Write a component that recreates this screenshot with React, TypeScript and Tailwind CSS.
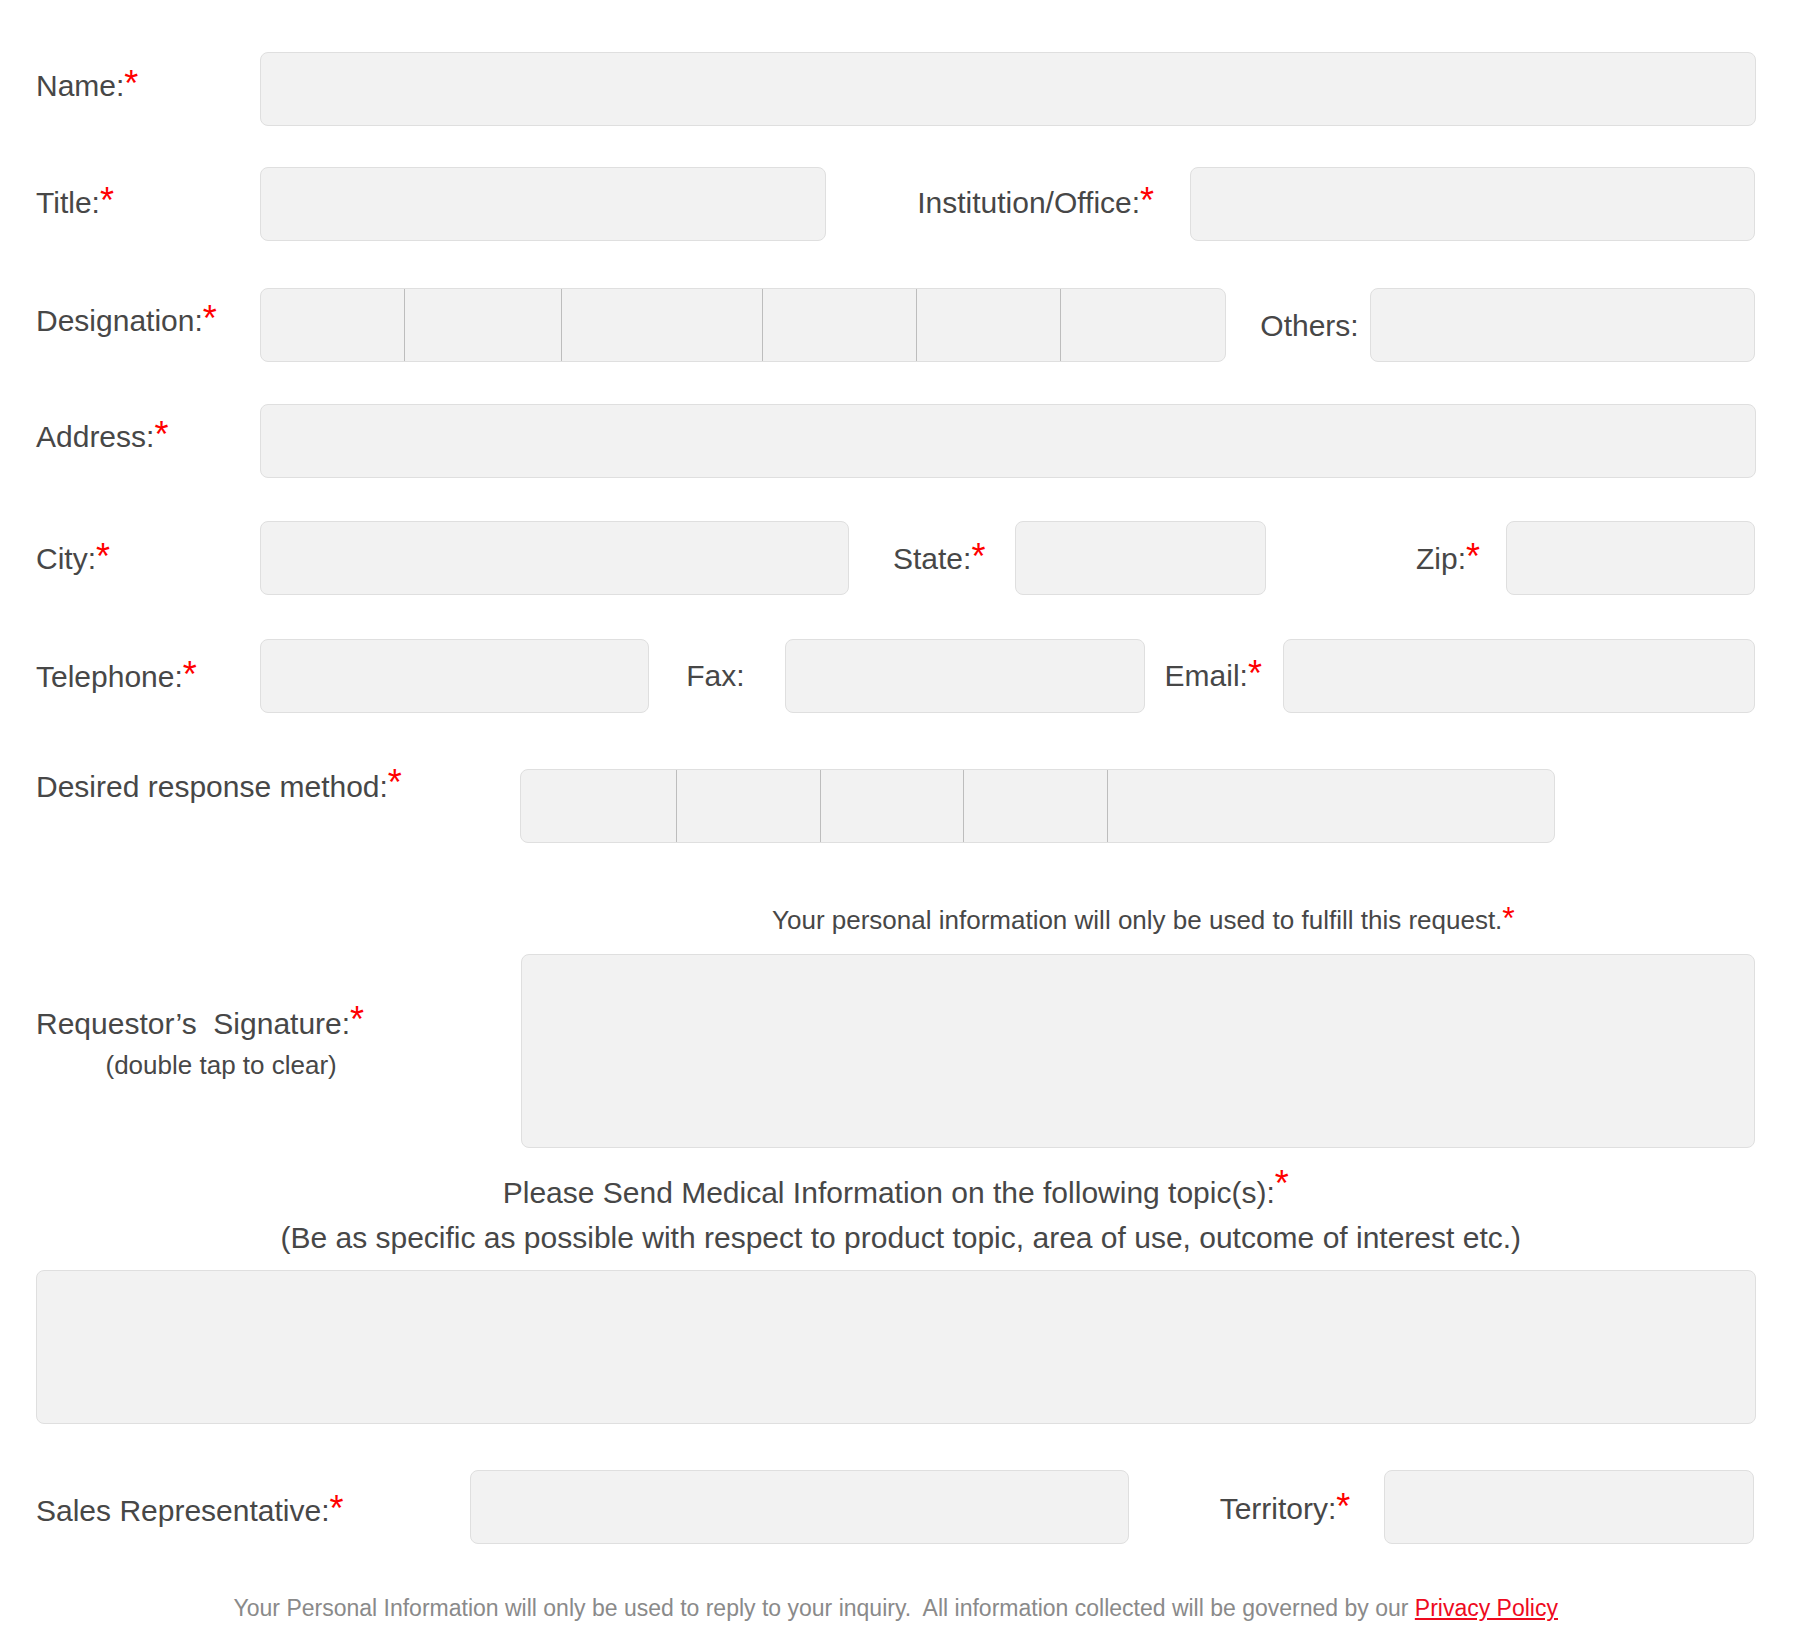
import React from "react";

const Star = ({ cls = "" }: { cls?: string }) => (
  <span className={`text-[36px] leading-[0px] text-[#ff0000] ${cls}`}>*</span>
);

const Label = ({ cls, children }: { cls: string; children: React.ReactNode }) => (
  <div className={`shrink-0 whitespace-nowrap text-[30px] leading-[36px] text-[#474747] ${cls}`}>{children}</div>
);

const Box = ({ cls }: { cls: string }) => (
  <div className={`shrink-0 h-[74px] rounded-[8px] border border-[#dfdfdf] bg-[#f2f2f2] ${cls}`} />
);

const Gap = ({ cls }: { cls: string }) => <div className={`shrink-0 ${cls}`} />;

const Seg = ({ cls }: { cls: string }) => <div className={`h-full ${cls}`} />;

export default function App() {
  return (
    <div className="min-h-[1650px] w-[1800px] bg-white font-['Liberation_Sans',Arial,sans-serif]">
      <div className="ml-[36px] w-[1719.5px] pt-[52px]">
        {/* Name */}
        <div className="flex items-start">
          <Label cls="w-[223.5px] mt-[16px]">Name:<Star /></Label>
          <Box cls="w-[1496px]" />
        </div>

        {/* Title / Institution */}
        <div className="mt-[41px] flex items-start">
          <Label cls="w-[223.5px] mt-[18px]">Title:<Star /></Label>
          <Box cls="w-[566px]" />
          <Gap cls="w-[91.7px]" />
          <Label cls="w-[272.8px] mt-[18px]">Institution/Office:<Star /></Label>
          <Box cls="w-[565.5px]" />
        </div>

        {/* Designation / Others */}
        <div className="mt-[47px] flex items-start">
          <Label cls="w-[223.5px] mt-[15px]">Designation:<Star /></Label>
          <div className="flex h-[74px] w-[966px] shrink-0 overflow-hidden rounded-[8px] border border-[#dfdfdf] bg-[#f2f2f2]">
            <Seg cls="w-[143px]" />
            <Seg cls="w-[157px] border-l border-[#bdbdbd]" />
            <Seg cls="w-[201.5px] border-l border-[#bdbdbd]" />
            <Seg cls="w-[154.3px] border-l border-[#bdbdbd]" />
            <Seg cls="w-[143.5px] border-l border-[#bdbdbd]" />
            <Seg cls="flex-1 border-l border-[#bdbdbd]" />
          </div>
          <Gap cls="w-[34.8px]" />
          <Label cls="w-[109.3px] mt-[20px]">Others:</Label>
          <Box cls="w-[385.9px]" />
        </div>

        {/* Address */}
        <div className="mt-[42px] flex items-start">
          <Label cls="w-[223.5px] mt-[15px]">Address:<Star /></Label>
          <Box cls="w-[1496px]" />
        </div>

        {/* City / State / Zip */}
        <div className="mt-[43px] flex items-start">
          <Label cls="w-[223.5px] mt-[20px]">City:<Star /></Label>
          <Box cls="w-[589.5px]" />
          <Gap cls="w-[44px]" />
          <Label cls="w-[122.4px] mt-[20px]">State:<Star /></Label>
          <Box cls="w-[250.3px]" />
          <Gap cls="w-[150.3px]" />
          <Label cls="w-[89.6px] mt-[20px]">Zip:<Star /></Label>
          <Box cls="w-[249.9px]" />
        </div>

        {/* Telephone / Fax / Email */}
        <div className="mt-[44px] flex items-start">
          <Label cls="w-[223.5px] mt-[20px]">Telephone:<Star /></Label>
          <Box cls="w-[389.8px]" />
          <Gap cls="w-[37px]" />
          <Label cls="w-[99px] mt-[19px]">Fax:</Label>
          <Box cls="w-[359.8px]" />
          <Gap cls="w-[19.5px]" />
          <Label cls="w-[118.9px] mt-[19px]">Email:<Star /></Label>
          <Box cls="w-[472px]" />
        </div>

        {/* Desired response method */}
        <div className="mt-[56px] flex items-start">
          <Label cls="w-[483.5px] mt-[0px]">Desired response method:<Star cls="relative -top-[2px]" /></Label>
          <div className="flex h-[74px] w-[1035.5px] shrink-0 overflow-hidden rounded-[8px] border border-[#dfdfdf] bg-[#f2f2f2]">
            <Seg cls="w-[155.7px]" />
            <Seg cls="w-[144.1px] border-l border-[#bdbdbd]" />
            <Seg cls="w-[142.8px] border-l border-[#bdbdbd]" />
            <Seg cls="w-[143.6px] border-l border-[#bdbdbd]" />
            <Seg cls="flex-1 border-l border-[#bdbdbd]" />
          </div>
        </div>

        {/* Note */}
        <div className="mt-[62px] pl-[736px] whitespace-nowrap text-[26px] leading-[30px] text-[#474747]">
          Your personal information will only be used to fulfill this request.
          <span className="text-[32px] leading-[0px] text-[#ff0000]">*</span>
        </div>

        {/* Signature */}
        <div className="mt-[19px] flex items-start">
          <div className="w-[485.2px] shrink-0">
            <Label cls="mt-[52px]">
              Requestor’s{"\u00a0"} Signature:<Star cls="relative -top-[2px]" />
            </Label>
            <div className="mt-[7px] pl-[69.5px] whitespace-nowrap text-[26px] leading-[32px] text-[#474747]">
              (double tap to clear)
            </div>
          </div>
          <div className="h-[194px] w-[1234.3px] shrink-0 rounded-[8px] border border-[#dfdfdf] bg-[#f2f2f2]" />
        </div>

        {/* Heading */}
        <div className="mt-[22px] text-center text-[30px] leading-[45px] text-[#474747]">
          <div>
            Please Send Medical Information on the following topic(s):
            <Star cls="relative -top-[7px]" />
          </div>
          <div className="pl-[10px]">(Be as specific as possible with respect to product topic, area of use, outcome of interest etc.)</div>
        </div>

        {/* Topic textarea */}
        <div className="mt-[10px] h-[154px] w-full rounded-[8px] border border-[#dfdfdf] bg-[#f2f2f2]" />

        {/* Sales / Territory */}
        <div className="mt-[46px] flex items-start">
          <Label cls="w-[433.6px] mt-[23px]">Sales Representative:<Star /></Label>
          <Box cls="w-[659.4px]" />
          <Gap cls="w-[90.7px]" />
          <Label cls="w-[164.8px] mt-[21px]">Territory:<Star /></Label>
          <Box cls="w-[369.1px]" />
        </div>

        {/* Footer */}
        <div className="mt-[50px] text-center whitespace-nowrap text-[23px] leading-[28px] text-[#8a8a8a]">
          Your Personal Information will only be used to reply to your inquiry.{"\u00a0"} All information collected will be governed by our{" "}
          <a href="#" className="text-[#ee0a1e] underline decoration-[#ee0a1e]">Privacy Policy</a>
        </div>
      </div>
    </div>
  );
}
